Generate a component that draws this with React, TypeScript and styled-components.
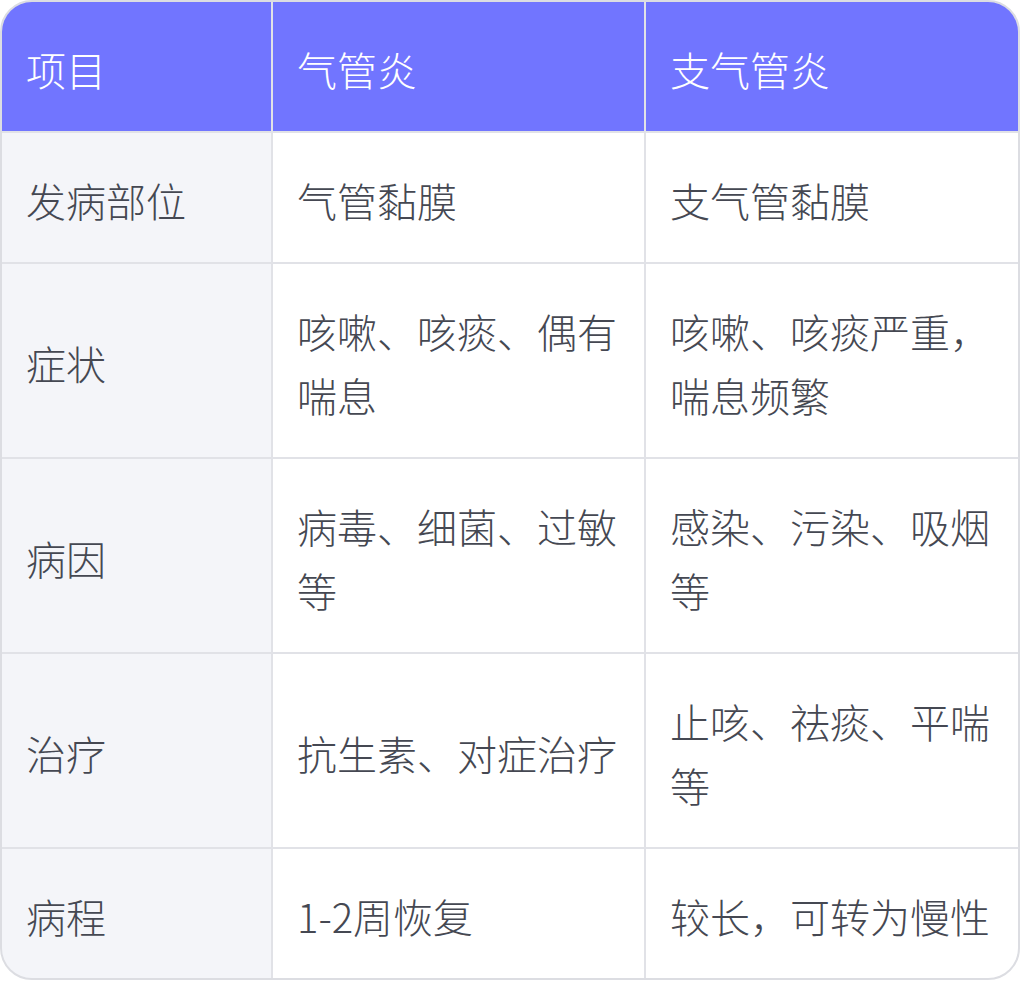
import React from 'react'
import styled, { createGlobalStyle } from 'styled-components'

const GlobalStyle = createGlobalStyle`
  html, body {
    margin: 0;
    padding: 0;
    background: #ffffff;
  }
`

interface Row {
  label: string
  trachea: string
  bronchi: string
}

const rows: Row[] = [
  { label: '发病部位', trachea: '气管黏膜', bronchi: '支气管黏膜' },
  { label: '症状', trachea: '咳嗽、咳痰、偶有喘息', bronchi: '咳嗽、咳痰严重，喘息频繁' },
  { label: '病因', trachea: '病毒、细菌、过敏等', bronchi: '感染、污染、吸烟等' },
  { label: '治疗', trachea: '抗生素、对症治疗', bronchi: '止咳、祛痰、平喘等' },
  { label: '病程', trachea: '1-2周恢复', bronchi: '较长，可转为慢性' }
]

export default function App() {
  return (
    <>
      <GlobalStyle />
      <S.Table>
        <S.Cell $kind='head'>项目</S.Cell>
        <S.Cell $kind='head'>气管炎</S.Cell>
        <S.Cell $kind='head'>支气管炎</S.Cell>
        {rows.map((row) => (
          <React.Fragment key={row.label}>
            <S.Cell $kind='label'>{row.label}</S.Cell>
            <S.Cell $kind='body'>{row.trachea}</S.Cell>
            <S.Cell $kind='body'>{row.bronchi}</S.Cell>
          </React.Fragment>
        ))}
      </S.Table>
    </>
  )
}

const S = {
  Table: styled.div`
    width: 1020px;
    box-sizing: border-box;
    display: grid;
    grid-template-columns: 269px 371px 372px;
    gap: 2px;
    background-color: #e1e2e7;
    border: 2px solid #dcdde2;
    border-radius: 32px;
    overflow: hidden;
  `,
  Cell: styled.div<{ $kind: 'head' | 'label' | 'body' }>`
    display: flex;
    align-items: center;
    padding: 34.5px 24px 30.5px;
    font-family: 'Noto Sans CJK SC', 'Noto Sans', sans-serif;
    font-weight: 300;
    font-size: 40px;
    line-height: 64px;
    color: ${(p) => (p.$kind === 'head' ? '#ffffff' : '#454852')};
    background-color: ${(p) =>
      p.$kind === 'head' ? '#7175ff' : p.$kind === 'label' ? '#f4f5f9' : '#ffffff'};
  `
}
